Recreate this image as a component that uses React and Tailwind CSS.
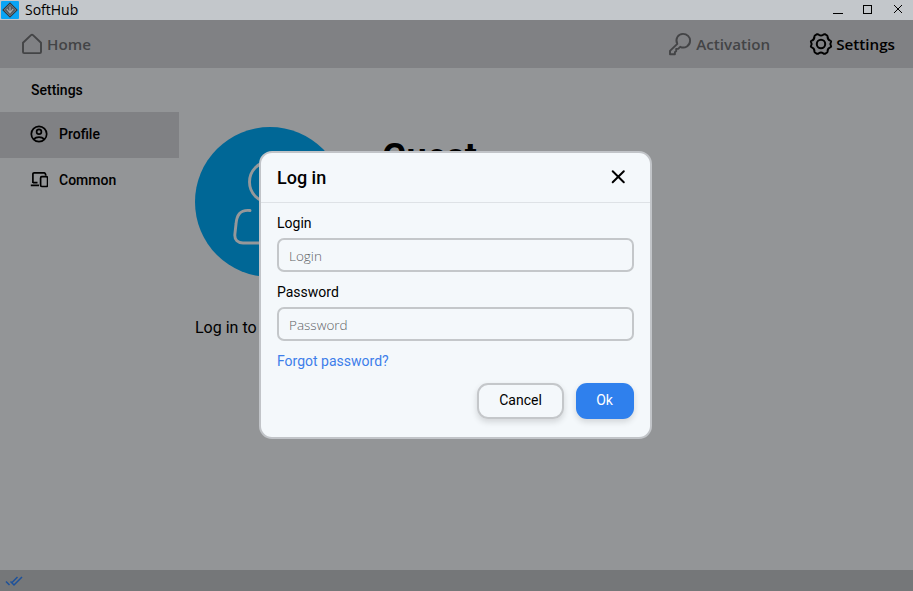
import React from "react";

function AppIcon() {
  return (
    <svg viewBox="0 0 18 18" className="h-[18px] w-[18px]">
      <rect width="18" height="18" rx="1" fill="#09a4f5" />
      <path d="M9 1.2 16.8 9 9 16.8 1.2 9Z" fill="#33393f" />
      <path d="M9 3.2 14.8 9 9 14.8 3.2 9Z" fill="#53595f" stroke="#8d9296" strokeWidth="0.7" />
      <path d="M5.8 7.8 9 11.8 12.2 7.8M9 5.5v6" fill="none" stroke="#a9adb0" strokeWidth="1.1" />
    </svg>
  );
}

function HomeIcon() {
  return (
    <svg viewBox="0 0 22 22" className="h-[22px] w-[22px]" fill="none" stroke="currentColor" strokeWidth="1.9" strokeLinejoin="round">
      <path d="M2 9.8 10 2.1Q11 1.2 12 2.1L20 9.8V19Q20 20.1 18.8 20.1H3.2Q2 20.1 2 19Z" />
    </svg>
  );
}

function KeyIcon() {
  return (
    <svg viewBox="0 0 24 24" className="h-6 w-6" fill="none" stroke="currentColor" strokeWidth="1.9" strokeLinejoin="round">
      <path d="M9.3 11.9C6.9 7.2 9.9 1.9 15 1.9C19 1.9 22.1 4.9 22.1 8.6C22.1 13.8 16.9 17 12.2 14.8L10.1 16.9H8.2V19L6.9 20.2V22.2H2V18.9Z" />
    </svg>
  );
}

function GearIcon() {
  return (
    <svg viewBox="0 0 24 24" className="h-6 w-6" fill="none" stroke="currentColor" strokeWidth="2" strokeLinejoin="round">
      <path d="M8.1 2.2Q9 2 9.8 2.8Q12 4.4 14.2 2.8Q15 2 15.9 2.2L18.1 3.5Q18.8 4.1 18.6 5.2Q18.8 7.8 21.2 8.6Q22.4 9 22 10Q20.6 12 22 14Q22.4 15 21.2 15.4Q18.8 16.2 18.6 18.8Q18.8 19.9 18.1 20.5L15.9 21.8Q15 22 14.2 21.2Q12 19.6 9.8 21.2Q9 22 8.1 21.8L5.9 20.5Q5.2 19.9 5.4 18.8Q5.2 16.2 2.8 15.4Q1.6 15 2 14Q3.4 12 2 10Q1.6 9 2.8 8.6Q5.2 7.8 5.4 5.2Q5.2 4.1 5.9 3.5Z" />
      <circle cx="12" cy="12" r="4.2" />
    </svg>
  );
}

function ProfileIcon() {
  return (
    <svg viewBox="0 0 18 18" className="h-[18px] w-[18px]" fill="none" stroke="currentColor" strokeWidth="1.7">
      <circle cx="9" cy="9" r="7.7" />
      <circle cx="9" cy="6.7" r="2.4" />
      <path d="M3.8 14.2Q5.8 12.1 9 12.1T14.2 14.2" />
    </svg>
  );
}

function DevicesIcon() {
  return (
    <svg viewBox="0 0 18 18" className="h-[18px] w-[18px]" fill="none" stroke="currentColor" strokeWidth="1.7" strokeLinejoin="round">
      <path d="M2.9 12V3.1Q2.9 1.8 4.2 1.8H14.2Q15.5 1.8 15.8 4.6M2.9 11.7H7.5M0.8 14.3H9" />
      <rect x="10.6" y="5.7" width="7" height="9.8" rx="1.2" />
    </svg>
  );
}

function Avatar() {
  return (
    <svg viewBox="0 0 150 150" className="h-[150px] w-[150px] shrink-0">
      <circle cx="75" cy="75" r="75" fill="#006796" />
      <g fill="none" stroke="#96989a" strokeWidth="2.9" strokeLinecap="round">
        <circle cx="75" cy="55" r="20.5" />
        <path d="M55 83.5C44.5 82.5 41.7 88.5 41 97L39.9 107C39.2 113 43 116 48 116H102C107 116 110.8 113 110.1 107L109 97C108.3 88.5 105.5 82.5 95 83.5" />
      </g>
    </svg>
  );
}

function Field({ label, type }) {
  return (
    <label className="flex flex-col text-sm leading-5">
      <span>{label}</span>
      <input
        type={type}
        placeholder={label}
        className="mt-[5px] h-[34px] w-full rounded-[7px] border-2 border-[#c4c7ca] bg-transparent px-[10px] pt-0.5 font-['Open_Sans',sans-serif] text-[13.5px] font-light outline-none placeholder:text-[#606366]"
      />
    </label>
  );
}

function LoginDialog() {
  return (
    <section
      role="dialog"
      className="absolute top-[151px] left-[259px] flex h-[288px] w-[393px] flex-col rounded-[13px] border-2 border-[#c1c4c8] bg-[#f4f8fb] text-black"
    >
      <header className="flex h-[50px] shrink-0 items-center justify-between border-b border-[#dee2e6] pr-6 pl-4">
        <h2 className="text-lg font-medium">Log in</h2>
        <button aria-label="Close" className="pb-0.5">
          <svg viewBox="0 0 16 16" className="h-4 w-4" fill="none" stroke="currentColor" strokeWidth="2" strokeLinecap="round">
            <path d="M2.7 2.2 13.8 13.3M13.8 2.2 2.7 13.3" />
          </svg>
        </button>
      </header>
      <div className="flex flex-col gap-[10px] px-4 pt-[10px]">
        <Field label="Login" type="text" />
        <Field label="Password" type="password" />
        <a className="text-sm leading-5 text-[#3d7eea]">Forgot password?</a>
      </div>
      <footer className="mt-3 flex justify-end gap-3 px-4 text-sm">
        <button className="h-9 w-[87px] rounded-[11px] border-2 border-[#c4c7ca] pb-0.5 shadow-[0_3px_6px_rgba(0,0,0,0.14)]">Cancel</button>
        <button className="h-9 w-[58px] rounded-[11px] bg-[#2f80ed] pr-px pb-0.5 text-white shadow-[0_3px_6px_rgba(0,0,0,0.14)]">Ok</button>
      </footer>
    </section>
  );
}

export default function App() {
  return (
    <div className="relative flex h-[591px] w-[913px] flex-col overflow-hidden bg-[#939597] font-[Roboto,sans-serif] text-black">
      <div className="flex h-5 shrink-0 items-start justify-between bg-[#c3c7cb] pl-px">
        <div className="flex items-center gap-[6px] font-['Open_Sans',sans-serif] text-sm leading-5">
          <AppIcon />
          <span>SoftHub</span>
        </div>
        <svg viewBox="0 0 80 20" className="h-5 w-20" fill="none" stroke="black" shapeRendering="crispEdges">
          <path d="M0 13.5H10M30.5 5.5H38.5V13.5H30.5Z" />
          <path d="M61 5 69 13M69 5 61 13" shapeRendering="auto" />
        </svg>
      </div>
      <nav className="flex h-12 shrink-0 items-center bg-[#808184] pr-[18px] pl-[21px] font-['Open_Sans',sans-serif] text-[15.2px] font-semibold text-[#434446]">
        <a className="flex items-center gap-1">
          <HomeIcon />
          <span>Home</span>
        </a>
        <a className="ml-auto flex items-center gap-1">
          <KeyIcon />
          <span>Activation</span>
        </a>
        <a className="ml-[39px] flex items-center gap-[3px] text-black">
          <GearIcon />
          <span>Settings</span>
        </a>
      </nav>
      <div className="flex min-h-0 flex-1">
        <aside className="w-[179px] shrink-0 text-sm font-medium">
          <h1 className="h-11 pl-[31px] leading-[44px]">Settings</h1>
          <a className="flex h-[46px] items-center gap-[11px] bg-[#808184] pb-0.5 pl-[30px]">
            <ProfileIcon />
            <span>Profile</span>
          </a>
          <a className="flex h-[46px] items-center gap-[11px] pb-0.5 pl-[30px]">
            <DevicesIcon />
            <span>Common</span>
          </a>
        </aside>
        <main className="flex-1 pt-[59px] pl-4">
          <div className="flex items-start">
            <Avatar />
            <h2 className="mt-3 ml-[37px] text-[36px] leading-9 font-bold">Guest</h2>
          </div>
          <p className="mt-[39px] text-base leading-6">Log in to your account</p>
        </main>
      </div>
      <footer className="flex h-[21px] shrink-0 items-center bg-[#757779] pl-[5px]">
        <svg viewBox="0 0 18 12" className="h-3 w-[18px]" fill="none" stroke="#1d519b" strokeWidth="1.5">
          <path d="M1 6.5 4.5 10M5.5 6.5 9 10 17 2M6.8 7.7 12.5 2" />
        </svg>
      </footer>
      <LoginDialog />
    </div>
  );
}
